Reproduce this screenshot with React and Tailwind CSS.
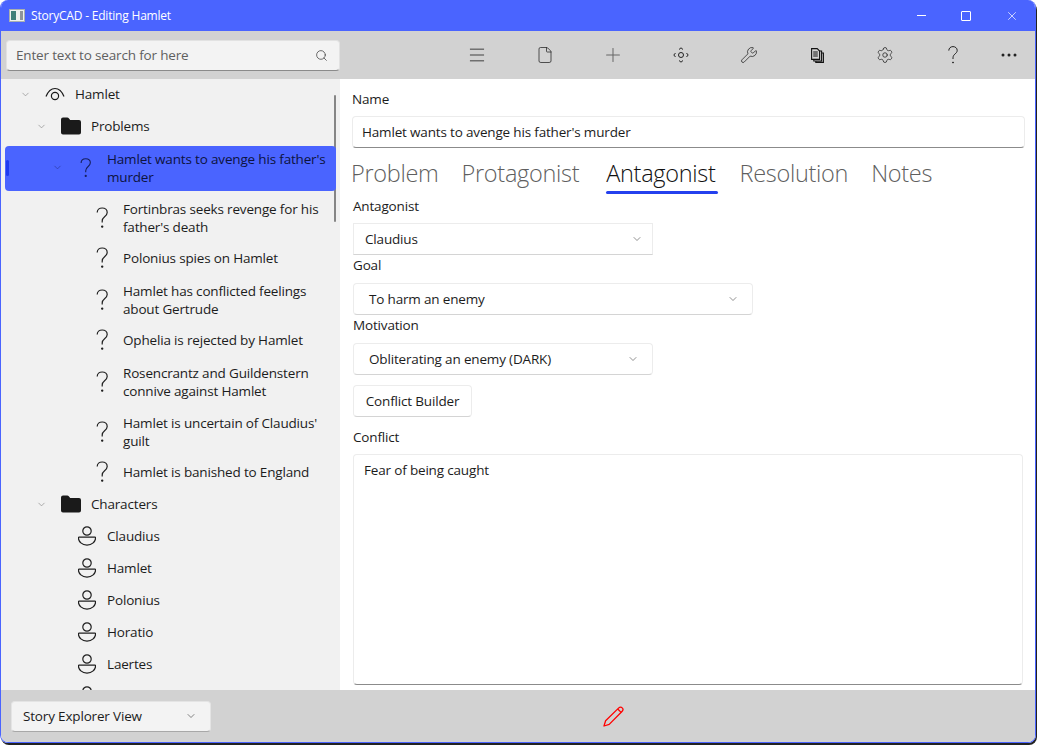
import { ChevronDown, Search, Plus, Wrench, Settings, X, Menu, File } from 'lucide-react'

const problems = [
  { text: ["Fortinbras seeks revenge for his", "father's death"] },
  { text: ['Polonius spies on Hamlet'] },
  { text: ['Hamlet has conflicted feelings', 'about Gertrude'] },
  { text: ['Ophelia is rejected by Hamlet'] },
  { text: ['Rosencrantz and Guildenstern', 'connive against Hamlet'] },
  { text: ["Hamlet is uncertain of Claudius'", 'guilt'] },
  { text: ['Hamlet is banished to England'] },
]

const characters = ['Claudius', 'Hamlet', 'Polonius', 'Horatio', 'Laertes', '']

function AppIcon() {
  return (
    <svg width="16" height="13" viewBox="0 0 16 13" className="shrink-0">
      <rect x="0.5" y="0.5" width="15" height="12" fill="#eef1ee" stroke="#a9b0b0" />
      <rect x="2" y="2" width="5" height="9" fill="#3f7f78" />
      <rect x="11" y="2" width="3" height="9" fill="#8f959a" />
    </svg>
  )
}

function OverviewIcon() {
  return (
    <svg width="20" height="14" viewBox="0 0 20 14" fill="none" stroke="#1a1a1a" strokeWidth="1.2">
      <path d="M1 9.5C3 4.500 6.500 1.500 10 1.500s7 3 9 8" />
      <circle cx="10" cy="9" r="3.6" />
    </svg>
  )
}

function FolderIcon() {
  return (
    <svg width="20" height="18" viewBox="0 0 20 18" fill="#1a1a1a">
      <path d="M0 2.500A2 2 0 0 1 2 .5h4.200c.7 0 1.200.3 1.600.8L9.200 3H18a2 2 0 0 1 2 2v10.500a2 2 0 0 1-2 2H2a2 2 0 0 1-2-2Z" />
    </svg>
  )
}

function QuestionIcon({ color = '#1f1f1f' }) {
  return (
    <svg width="13" height="22" viewBox="0 0 13 22" fill="none" stroke={color} strokeWidth="1.2">
      <path d="M1.200 5.600C1.200 2.800 3.400 1 6.200 1c2.900 0 5 1.900 5 4.400 0 2-1 3-2.600 4.300C7 11 6.200 12.200 6.200 14v1.600" />
      <circle cx="6.200" cy="19.600" r="0.6" fill={color} />
    </svg>
  )
}

function PersonIcon() {
  return (
    <svg width="18" height="20" viewBox="0 0 18 20" fill="none" stroke="#1f1f1f" strokeWidth="1.2">
      <circle cx="9" cy="5" r="4.200" />
      <path d="M1 11.200h16c.4 0 .6.2.6.6 0 3.800-3.600 7.400-8.600 7.400S.4 15.600.4 11.800c0-.4.2-.6.6-.6Z" />
    </svg>
  )
}

function NavIcon() {
  return (
    <svg width="16" height="16" viewBox="0 0 16 16" fill="none" stroke="#222" strokeWidth="1">
      <circle cx="8" cy="8" r="2.500" />
      <path d="M6 2.500 8 .8l2 1.700M6 13.500l2 1.700 2-1.700M2.500 6 .8 8l1.700 2M13.500 6l1.700 2-1.700 2" />
    </svg>
  )
}

function CopyDocsIcon() {
  return (
    <svg width="13" height="15" viewBox="0 0 13 15" fill="none" stroke="#111" strokeWidth="1.100">
      <path d="M.6.600h5.600l2.400 2.400v8.400H.6Z" />
      <path d="M2.200 4h4.600M2.200 6h4.600M2.200 8h4.600" />
      <path d="M8.600 3h2v10H2.800v-1.600M10.600 5h1.800v9.400H4.800V13" />
    </svg>
  )
}

function HelpIcon() {
  return (
    <svg width="10" height="18" viewBox="0 0 10 18" fill="none" stroke="#222" strokeWidth="1">
      <path d="M.8 4.600C.8 2.200 2.600.6 5 .6c2.300 0 4.200 1.600 4.200 3.700 0 1.800-1 2.600-2.200 3.700C5.800 9 5 10.200 5 11.800V13" />
      <circle cx="5" cy="16.500" r="0.500" fill="#222" />
    </svg>
  )
}

function MoreIcon() {
  return (
    <svg width="16" height="4" viewBox="0 0 16 4" fill="#222">
      <circle cx="2" cy="2" r="1.500" />
      <circle cx="8" cy="2" r="1.500" />
      <circle cx="14" cy="2" r="1.500" />
    </svg>
  )
}

function RedPencil() {
  return (
    <svg width="21" height="21" viewBox="0 0 21 21" fill="none" stroke="#ff0000" strokeWidth="1.300" strokeLinejoin="round">
      <path d="M1 20l1.600-5.200L15.800 1.900c1-1 2.500-1 3.400 0 .9.900.9 2.400 0 3.300L6.200 18.400Z" />
      <path d="M14.700 3l3.400 3.400" />
    </svg>
  )
}

function Caret({ className = 'text-[#8a8a8a]' }) {
  return <ChevronDown size={11} strokeWidth={1.5} className={className} />
}

function Row({ indent, boxW = 'w-[20px]', caret, icon, lines, iconW = 'w-4', textGap = 'ml-[12px]' }) {
  return (
    <div className={`flex items-center shrink-0 ${lines.length > 1 ? 'h-[50px] pt-[2px]' : 'h-8'}`}>
      <div className={`${boxW} shrink-0`} style={{ marginLeft: indent }}>
        {caret && <Caret />}
      </div>
      <div className={`${iconW} flex justify-center shrink-0`}>{icon}</div>
      <div className={`${textGap} leading-[18px] text-[#1c1c1c] whitespace-nowrap`}>
        {lines.map((l) => (
          <div key={l}>{l}</div>
        ))}
      </div>
    </div>
  )
}

function Tree() {
  return (
    <div className="relative w-[339px] h-full bg-[#f1f1f1] overflow-hidden">
      <div className="absolute left-[333px] top-[16px] w-[2px] h-[127px] rounded-full bg-[#868686]" />
      <div className="flex flex-col -mt-px">
        <Row indent={19} boxW="w-[25px]" caret icon={<OverviewIcon />} lines={['Hamlet']} iconW="w-[20px]" textGap="ml-[10px]" />
        <Row indent={35} boxW="w-[25px]" caret icon={<FolderIcon />} lines={['Problems']} iconW="w-[20px]" textGap="ml-[10px]" />
        <div className="relative h-[50px] shrink-0 flex items-center pt-[1px]">
          <div className="absolute left-[4px] right-[4px] top-[4px] bottom-[1px] rounded-[4px] bg-[#4a64ff]" />
          <div className="absolute left-[5px] top-[18px] w-[3px] h-[16px] rounded-full bg-[#1f3bf0]" />
          <div className="relative flex items-center">
            <div className="w-[28px] ml-[51px] shrink-0">
              <Caret className="text-[#2a3aa0]" />
            </div>
            <div className="w-[12px] flex justify-center shrink-0">
              <QuestionIcon color="#16205e" />
            </div>
            <div className="ml-[15px] leading-[18px] text-[#0d1340] whitespace-nowrap">
              <div>Hamlet wants to avenge his father's</div>
              <div>murder</div>
            </div>
          </div>
        </div>
        {problems.map((p) => (
          <Row key={p.text[0]} indent={73} icon={<QuestionIcon />} lines={p.text} textGap="ml-[13px]" />
        ))}
        <Row indent={35} boxW="w-[25px]" caret icon={<FolderIcon />} lines={['Characters']} iconW="w-[20px]" textGap="ml-[10px]" />
        {characters.map((c, i) => (
          <Row key={i} indent={57} icon={<PersonIcon />} lines={[c || '\u00a0']} iconW="w-[18px]" textGap="ml-[11px]" />
        ))}
      </div>
    </div>
  )
}

function Combo({ value, width, square, textPad = 'pl-[15px]', endPad = 'pr-[14px]' }) {
  return (
    <div
      className={`flex items-center justify-between h-8 bg-white border border-[#ececec] border-b-[#d4d4d4] ${textPad} ${endPad} ${width} ${
        square ? '' : 'rounded-[4px]'
      }`}
    >
      <span className="text-[#1c1c1c]">{value}</span>
      <ChevronDown size={12} strokeWidth={1.3} className="text-[#555]" />
    </div>
  )
}

export default function App() {
  return (
    <div className="w-[1037px] h-[745px] bg-white font-['Open_Sans',sans-serif] text-[13.5px] tracking-[-0.17px] overflow-hidden">
      <div className="w-[1036px] h-[743px] flex flex-col rounded-[8px] overflow-hidden border border-[#4a64ff] border-t-0 shadow-[1px_2px_0_#222]">
        <div className="h-[31px] shrink-0 bg-[#4a64ff] flex items-center pl-[8px] text-white">
          <AppIcon />
          <span className="ml-[6px] text-[12px] tracking-[-0.2px]">StoryCAD - Editing Hamlet</span>
          <div className="ml-auto flex items-center text-white">
            <div className="w-[46px] flex justify-center"><div className="w-[9px] h-px bg-white" /></div>
            <div className="w-[44px] flex justify-center"><div className="w-[10px] h-[10px] rounded-[1px] border border-white" /></div>
            <div className="w-[47px] flex justify-center"><X size={14} strokeWidth={1.2} /></div>
          </div>
        </div>

        <div className="h-[48px] shrink-0 bg-[#d2d2d2] flex items-center">
          <div className="ml-[5px] w-[334px] h-[31px] bg-[#f3f3f3] rounded-[4px] border border-[#e2e2e2] border-b-[#8b8b8b] flex items-center justify-between pl-[9px] pr-[11px]">
            <span className="text-[#5f5f5f]">Enter text to search for here</span>
            <Search size={13} strokeWidth={1.3} className="text-[#333]" />
          </div>
          <div className="flex-1 flex items-center pl-[103px] text-[#222]">
            <div className="w-[68px] flex justify-center"><Menu size={20} strokeWidth={1} /></div>
            <div className="w-[68px] flex justify-center"><File size={18} strokeWidth={1} /></div>
            <div className="w-[68px] flex justify-center"><Plus size={22} strokeWidth={1.1} className="text-[#666]" /></div>
            <div className="w-[68px] flex justify-center"><NavIcon /></div>
            <div className="w-[68px] flex justify-center"><Wrench size={18} strokeWidth={1} /></div>
            <div className="w-[68px] flex justify-center"><CopyDocsIcon /></div>
            <div className="w-[68px] flex justify-center"><Settings size={18} strokeWidth={1} /></div>
            <div className="w-[68px] flex justify-center"><HelpIcon /></div>
            <div className="w-[44px] flex justify-center"><MoreIcon /></div>
          </div>
        </div>

        <div className="flex-1 min-h-0 flex bg-white">
          <Tree />
          <div className="flex-1 pl-[12px] pr-[10px] pt-[11px] flex flex-col items-start">
            <div className="leading-[18px] text-[#1c1c1c]">Name</div>
            <div className="mt-[8px] w-full h-8 flex items-center rounded-[4px] border border-[#ececec] border-b-[#8b8b8b] pl-[9px] text-[#1c1c1c]">
              Hamlet wants to avenge his father's murder
            </div>
            <div className="mt-[8px] -ml-px flex text-[23.5px] font-light leading-[34px] tracking-[-0.3px] text-[#5f5f5f] h-[37px]">
              <span className="mr-[23px]">Problem</span>
              <span className="mr-[27px]">Protagonist</span>
              <span className="relative mr-[24px] text-[#111]">
                Antagonist
                <span className="absolute left-0 -right-[2px] top-[35px] h-[3px] rounded-full bg-[#2440ee]" />
              </span>
              <span className="mr-[23px]">Resolution</span>
              <span>Notes</span>
            </div>
            <div className="ml-[1px] mt-[4px] leading-[18px] text-[#1c1c1c]">Antagonist</div>
            <div className="ml-[1px] mt-[8px]"><Combo value="Claudius" width="w-[300px]" square textPad="pl-[11px]" endPad="pr-[9px]" /></div>
            <div className="ml-[1px] mt-[1px] leading-[18px] text-[#1c1c1c]">Goal</div>
            <div className="ml-[1px] mt-[9px]"><Combo value="To harm an enemy" width="w-[400px]" endPad="pr-[13px]" /></div>
            <div className="ml-[1px] mt-[1px] leading-[18px] text-[#1c1c1c]">Motivation</div>
            <div className="ml-[1px] mt-[9px]"><Combo value="Obliterating an enemy (DARK)" width="w-[300px]" endPad="pr-[13px]" /></div>
            <div className="ml-[1px] mt-[10px] h-8 w-[119px] flex items-center justify-center bg-white rounded-[4px] border border-[#ececec] border-b-[#d4d4d4] text-[#1c1c1c]">
              Conflict Builder
            </div>
            <div className="ml-[1px] mt-[11px] leading-[18px] text-[#1c1c1c]">Conflict</div>
            <div className="ml-[1px] mt-[8px] w-[670px] h-[231px] rounded-[4px] border border-[#ececec] border-b-[#8b8b8b] pl-[10px] pt-[5px] text-[#1c1c1c]">
              Fear of being caught
            </div>
          </div>
        </div>

        <div className="h-[52px] shrink-0 bg-[#d2d2d2] flex items-center pl-[10px]">
          <div className="w-[200px] h-[31px] bg-[#f3f3f3] rounded-[4px] border border-[#e4e4e4] border-b-[#a8a8a8] flex items-center justify-between pl-[11px] pr-[13px] text-[#1c1c1c]">
            <span>Story Explorer View</span>
            <ChevronDown size={12} strokeWidth={1.3} className="text-[#444]" />
          </div>
          <div className="ml-[392px]"><RedPencil /></div>
        </div>
      </div>
    </div>
  )
}
